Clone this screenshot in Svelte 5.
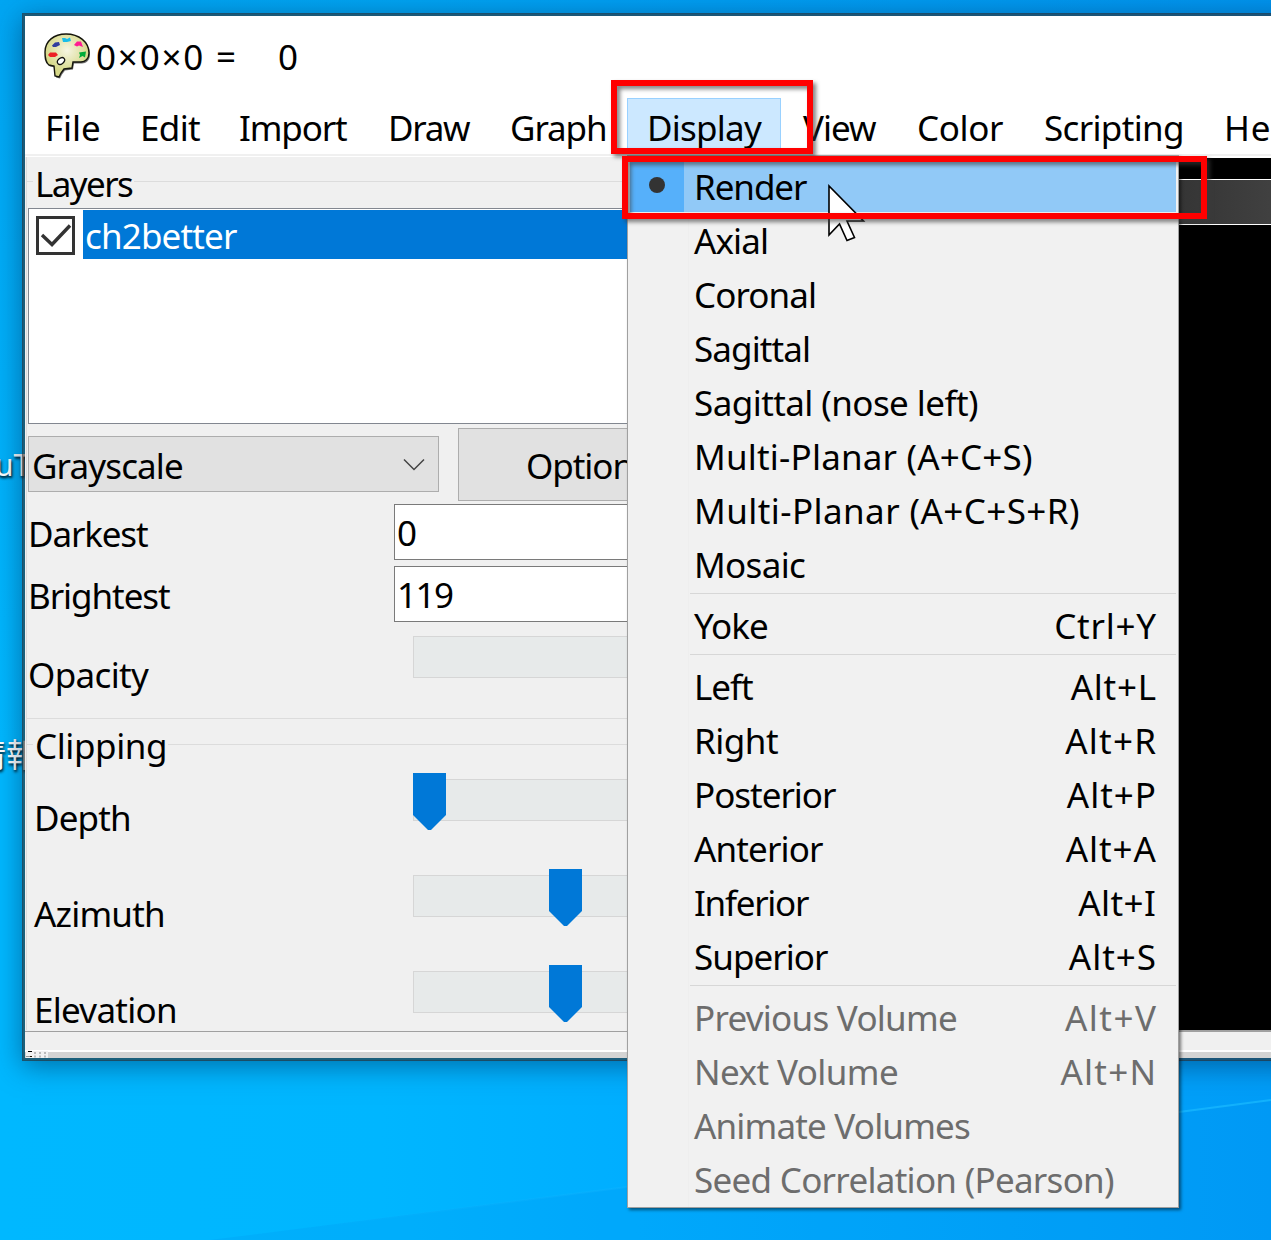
<script lang="ts">
  interface MenuEntry {
    label: string;
    width: number;
    shortcut?: string;
    shortcutWidth?: number;
    disabled?: boolean;
  }

  const MENUS = [
    { label: 'File', width: 51 },
    { label: 'Edit', width: 57 },
    { label: 'Import', width: 107 },
    { label: 'Draw', width: 80 },
    { label: 'Graph', width: 93 },
    { label: 'Display', width: 112 },
    { label: 'View', width: 74 },
    { label: 'Color', width: 84 },
    { label: 'Scripting', width: 137 },
    { label: 'Help', width: 74 },
  ];

  const GROUPS: MenuEntry[][] = [
    [
      { label: 'Render', width: 110 },
      { label: 'Axial', width: 73 },
      { label: 'Coronal', width: 119 },
      { label: 'Sagittal', width: 114 },
      { label: 'Sagittal (nose left)', width: 283 },
      { label: 'Multi-Planar (A+C+S)', width: 335 },
      { label: 'Multi-Planar (A+C+S+R)', width: 382 },
      { label: 'Mosaic', width: 108 },
    ],
    [{ label: 'Yoke', width: 73, shortcut: 'Ctrl+Y', shortcutWidth: 100 }],
    [
      { label: 'Left', width: 56, shortcut: 'Alt+L', shortcutWidth: 85 },
      { label: 'Right', width: 81, shortcut: 'Alt+R', shortcutWidth: 91 },
      { label: 'Posterior', width: 139, shortcut: 'Alt+P', shortcutWidth: 88 },
      { label: 'Anterior', width: 129, shortcut: 'Alt+A', shortcutWidth: 91 },
      { label: 'Inferior', width: 114, shortcut: 'Alt+I', shortcutWidth: 77 },
      { label: 'Superior', width: 133, shortcut: 'Alt+S', shortcutWidth: 86 },
    ],
    [
      { label: 'Previous Volume', width: 259, shortcut: 'Alt+V', shortcutWidth: 91, disabled: true },
      { label: 'Next Volume', width: 200, shortcut: 'Alt+N', shortcutWidth: 93, disabled: true },
      { label: 'Animate Volumes', width: 276, disabled: true },
      { label: 'Seed Correlation (Pearson)', width: 419, disabled: true },
    ],
  ];

  const SLIDERS = [
    { label: 'Depth', width: 92, pos: 0 },
    { label: 'Azimuth', width: 129, pos: 136 },
    { label: 'Elevation', width: 138, pos: 136 },
  ];

  let selected = $state('Render');
  let visible = $state(true);

  // spreads a label's letters so its ink covers the given number of pixels
  function fit(node: HTMLElement, width: number) {
    const text = node.textContent ?? '';
    const ctx = document.createElement('canvas').getContext('2d');
    if (!ctx || text.length < 2) return;
    const style = getComputedStyle(node);
    ctx.font = `${style.fontWeight} ${style.fontSize} ${style.fontFamily}`;
    const m = ctx.measureText(text);
    const ink = m.actualBoundingBoxRight + m.actualBoundingBoxLeft;
    const gap = (width - ink) / (text.length - 1);
    node.style.letterSpacing = `${gap}px`;
    node.style.marginRight = `${-gap}px`;
  }
</script>

<div class="desktop">
  <svg class="rays" width="1271" height="1240" viewBox="0 0 1271 1240">
    <defs>
      <linearGradient id="ray" gradientUnits="userSpaceOnUse" x1="300" y1="0" x2="1271" y2="0">
        <stop offset="0" stop-color="#18b8ff" stop-opacity="0" />
        <stop offset="1" stop-color="#18b8ff" stop-opacity="0.8" />
      </linearGradient>
    </defs>
    <path d="M210 1240L627 1187L1179 1112L1271 1100V1240Z" fill="#008be8" opacity="0.16" />
    <path d="M300 1229L627 1187L1179 1112L1271 1100" fill="none" stroke="url(#ray)" stroke-width="2" />
  </svg>
  <div class="icons">
    <span class="icon-name yt">uT</span>
    <span class="icon-name info">情報</span>
  </div>

  <div class="window">
    <header class="titlebar">
      <svg class="logo" width="50" height="48" viewBox="0 0 50 48">
        <defs>
          <radialGradient id="wood" cx="0.5" cy="0.38" r="0.5">
            <stop offset="0" stop-color="#f6f5e2" />
            <stop offset="1" stop-color="#d6d888" />
          </radialGradient>
        </defs>
        <path d="M2 20C2 9 11 2 23 2C36 2 46 10 46 21C46 27 42 30 38 30H30L29 36L21 37L18 41L16 45L12 44L11 34L6 33C2 30 2 25 2 20Z" fill="#333" opacity="0.7" transform="translate(1 1.5)" />
        <path d="M2 20C2 9 11 2 23 2C36 2 46 10 46 21C46 27 42 30 38 30H30L29 36L21 37L18 41L16 45L12 44L11 34L6 33C2 30 2 25 2 20Z" fill="url(#wood)" stroke="#15150c" stroke-width="1.4" />
        <ellipse cx="18" cy="29" rx="4" ry="2.8" fill="#fff" stroke="#111" stroke-width="1.3" transform="rotate(-40 18 29)" />
        <path d="M5 23L7 20.500H13L15 23L12 25H7Z" fill="#ed2024" />
        <path d="M9 13.500L12 10.500L16 10L17 13L13 15H10Z" fill="#303d9e" />
        <path d="M19 6H22L24 7L27 5.500L28 9L24 10H20Z" fill="#19bde9" />
        <path d="M31 13L34 9.500H38L40 15L36 13.500L34 14.500Z" fill="#ff1b92" />
        <path d="M36 20.500L43 19.500L42 25.500L39.500 24L36 26L37 23Z" fill="#00ab38" />
      </svg>
      <span class="title"><span use:fit={137}>0×0×0 =</span></span>
      <span class="title-value">0</span>
    </header>

    <nav class="menubar">
      {#each MENUS as menu}
        <div class="menu" class:open={menu.label === 'Display'}>
          <span use:fit={menu.width}>{menu.label}</span>
        </div>
      {/each}
    </nav>

    <div class="workspace">
      <aside class="panel">
        <section class="group layers">
          <h2 class="legend"><span use:fit={95}>Layers</span></h2>
          <div class="layer-list">
            <div class="layer">
              <button class="check" aria-label="Toggle layer" onclick={() => (visible = !visible)}>
                {#if visible}
                  <svg width="33" height="33" viewBox="0 0 33 33">
                    <path d="M3 16L13 25.500L31 6.500" fill="none" stroke="#333" stroke-width="3.400" />
                  </svg>
                {/if}
              </button>
              <div class="layer-name"><span use:fit={151}>ch2better</span></div>
            </div>
          </div>

          <div class="color-row">
            <div class="select">
              <span use:fit={148}>Grayscale</span>
              <svg width="22" height="13" viewBox="0 0 22 13">
                <path d="M1 1.500L11 11.500L21 1.500" fill="none" stroke="#444" stroke-width="1.500" />
              </svg>
            </div>
            <div class="options"><span use:fit={121}>Options</span></div>
          </div>

          <div class="field">
            <span use:fit={117}>Darkest</span>
            <div class="input">0</div>
          </div>
          <div class="field">
            <span use:fit={139}>Brightest</span>
            <div class="input"><span use:fit={53}>119</span></div>
          </div>
          <div class="opacity">
            <span use:fit={119}>Opacity</span>
            <div class="track"></div>
          </div>
        </section>

        <section class="group clipping">
          <h2 class="legend"><span use:fit={128}>Clipping</span></h2>
          {#each SLIDERS as slider}
            <div class="slider">
              <span use:fit={slider.width}>{slider.label}</span>
              <div class="track">
                <svg class="thumb" style:left="{slider.pos}px" width="33" height="57" viewBox="0 0 33 57">
                  <path d="M0 0H33V42L18 57H15L0 42Z" fill="#0078d7" />
                </svg>
              </div>
            </div>
          {/each}
        </section>
      </aside>
      <main class="viewer">
        <div class="colorbar"></div>
      </main>
    </div>

    <footer class="statusbar">
      <svg class="grip" width="22" height="7" viewBox="0 0 22 7">
        <path d="M0 0H22V7H0Z" fill="#f2f2f2" />
        <path d="M2 .5H6" stroke="#000" />
        <path d="M0 5.500H4" stroke="#999" />
        <path d="M4 5.500H6" stroke="#201400" />
        <path d="M8 2H20M8 5.500H20" stroke="#bbb" stroke-width="2" stroke-dasharray="2 3" />
      </svg>
    </footer>
  </div>

  <div class="popup">
    {#each GROUPS as group, i}
      {#if i > 0}
        <div class="separator"></div>
      {/if}
      {#each group as entry}
        <button
          class="entry"
          class:active={entry.label === selected}
          disabled={entry.disabled}
          onclick={() => (selected = entry.label)}
        >
          <span class="mark"></span>
          <span class="label" use:fit={entry.width}>{entry.label}</span>
          {#if entry.shortcut}
            <span class="keys"><span use:fit={entry.shortcutWidth ?? 0}>{entry.shortcut}</span></span>
          {/if}
        </button>
      {/each}
    {/each}
  </div>

  <div class="callout callout-menu"></div>
  <svg class="cursor" width="42" height="60" viewBox="0 0 42 60">
    <path d="M2 2V51L12.500 40L20 56.500L27.500 53.500L20 37H36.500Z" fill="#fff" stroke="#000" stroke-width="1.600" />
  </svg>
  <div class="callout callout-entry"></div>
</div>

<style>
  :global(body) {
    margin: 0;
  }

  .desktop {
    position: relative;
    width: 1271px;
    height: 1240px;
    overflow: hidden;
    font-family: 'Noto Sans', 'Open Sans', 'Noto Sans CJK JP', sans-serif;
    font-size: 35px;
    line-height: 54px;
    color: #000;
    white-space: nowrap;
    background:
      linear-gradient(rgba(0, 132, 220, 0.35), rgba(0, 132, 220, 0) 60%),
      linear-gradient(90deg, #00b8ff 0%, #00b6ff 30%, #00aeff 50%, #009df8 100%);
  }

  .rays {
    position: absolute;
    inset: 0;
  }

  .icons {
    position: absolute;
    left: 0;
    top: 0;
    width: 25px;
    height: 100%;
    overflow: hidden;
  }

  .icon-name {
    position: absolute;
    color: #fff;
    font-size: 30px;
    text-shadow: 1px 2px 3px #000;
  }

  .yt {
    left: -5px;
    top: 438px;
  }

  .info {
    left: -27px;
    top: 728px;
    font-size: 33px;
  }

  .window {
    position: relative;
    box-sizing: border-box;
    display: flex;
    flex-direction: column;
    width: 1300px;
    height: 1048px;
    margin-left: 22px;
    top: 13px;
    border: 3px solid rgba(45, 38, 36, 0.6);
    background: #fff;
    background-clip: padding-box;
    box-shadow: 0 5px 26px rgba(0, 40, 80, 0.5);
  }

  .titlebar {
    display: flex;
    align-items: center;
    height: 82px;
    flex: none;
  }

  .logo {
    margin: -2px 0 0 18px;
  }

  .title {
    margin: -1px 0 0 3px;
    width: 182px;
  }

  .title-value {
    margin-top: -1px;
  }

  .menubar {
    display: grid;
    grid-template-columns: 95px 99px 149px 122px 137px 159px 111px 127px 180px 120px;
    height: 56px;
    flex: none;
  }

  .menu {
    box-sizing: border-box;
    padding: 3px 0 0 20px;
  }

  /* the V has no side bearing */
  .menu:nth-child(7) {
    padding-left: 17px;
  }

  .menu.open {
    width: 154px;
    padding: 2px 0 0 19px;
    border: 1px solid #99d1ff;
    background: #cce8ff;
  }

  .workspace {
    display: flex;
    height: 877px;
    flex: none;
    border-top: 2px solid #f0f0f0;
    box-sizing: border-box;
  }

  .panel {
    width: 700px;
    margin-top: 1px;
    padding-left: 1px;
    box-sizing: border-box;
    background: #f0f0f0;
  }

  .group {
    position: relative;
    box-sizing: border-box;
    border-left: 1px solid #dcdcdc;
  }

  .group::before {
    content: '';
    position: absolute;
    left: 0;
    right: 0;
    top: 24px;
    border-top: 1px solid #dcdcdc;
  }

  .layers {
    height: 562px;
    border-bottom: 1px solid #dcdcdc;
  }

  .legend {
    position: relative;
    width: max-content;
    height: 51px;
    margin: 0 0 0 6px;
    padding: 0 0 0 2px;
    background: #f0f0f0;
    font-size: 35px;
    font-weight: 400;
    line-height: 53px;
  }

  .layer-list {
    box-sizing: border-box;
    height: 216px;
    margin-left: 1px;
    border: 1px solid #828790;
    background: #fff;
  }

  .layer {
    display: flex;
    align-items: center;
    height: 51px;
    padding: 0 0 0 7px;
  }

  .check {
    box-sizing: border-box;
    width: 39px;
    height: 39px;
    margin-top: 2px;
    padding: 0;
    border: 3px solid #333;
    background: #fff;
  }

  .check svg {
    display: block;
  }

  .layer-name {
    flex: 1;
    height: 49px;
    margin-left: 8px;
    padding-left: 2px;
    background: #0078d7;
    color: #fff;
    line-height: 51px;
  }

  .color-row {
    display: flex;
    align-items: flex-start;
    height: 80px;
    margin-left: 1px;
  }

  .select {
    display: flex;
    align-items: center;
    justify-content: space-between;
    box-sizing: border-box;
    width: 411px;
    height: 56px;
    margin-top: 12px;
    padding: 3px 13px 0 3px;
    border: 1px solid #adadad;
    background: #e1e1e1;
  }

  .select svg {
    margin-top: -3px;
  }

  .options {
    box-sizing: border-box;
    width: 260px;
    height: 73px;
    margin: 4px 0 0 19px;
    padding: 10px 0 0 67px;
    border: 1px solid #adadad;
    background: #e1e1e1;
  }

  .field {
    display: grid;
    grid-template-columns: 367px 300px;
    height: 62px;
    line-height: 60px;
  }

  .field > span,
  .opacity > span {
    margin-left: 1px;
  }

  .input {
    box-sizing: border-box;
    height: 56px;
    padding-left: 2px;
    border: 1px solid #7a7a7a;
    background: #fff;
    line-height: 56px;
  }

  .opacity {
    display: grid;
    grid-template-columns: 386px 300px;
    padding-top: 8px;
    line-height: 78px;
  }

  .track {
    position: relative;
    box-sizing: border-box;
    height: 42px;
    border: 1px solid #d6d6d6;
    background: #e7eaea;
  }

  .clipping {
    height: 311px;
  }

  .clipping::before {
    top: 25px;
  }

  .clipping .legend {
    height: 60px;
    line-height: 54px;
  }

  .slider {
    display: grid;
    grid-template-columns: 379px 300px;
    height: 96px;
    padding-left: 7px;
    line-height: 78px;
  }

  .thumb {
    position: absolute;
    top: -7px;
    margin-left: -1px;
  }

  .viewer {
    flex: 1;
    margin-top: 2px;
    padding-top: 21px;
    border-bottom: 1px solid #a0a0a0;
    background: #000;
  }

  .colorbar {
    height: 44px;
    border-top: 1px solid #fff;
    border-bottom: 1px solid #fff;
    background: linear-gradient(90deg, #000 0, #383838 480px, #424242 560px);
  }

  .statusbar {
    box-sizing: border-box;
    flex: 1;
    border-top: 1px solid #a0a0a0;
    background: linear-gradient(#f0f0f0 18px, #fff 18px, #fff 20px, #d4d4d4 20px);
  }

  .grip {
    display: block;
    margin: 19px 0 0 1px;
  }

  .popup {
    position: absolute;
    left: 627px;
    top: 155px;
    box-sizing: border-box;
    width: 552px;
    height: 1053px;
    padding: 2px;
    border: 1px solid #a0a0a0;
    background: linear-gradient(90deg, #f1f1f1 60px, #eee 60px, #eee 61px, #f1f1f1 61px);
    box-shadow: 2px 2px 3px rgba(0, 0, 0, 0.5);
  }

  .entry {
    display: flex;
    width: 100%;
    height: 54px;
    padding: 0;
    border: 0;
    background: none;
    color: #000;
    font: inherit;
    line-height: 57px;
    text-align: left;
  }

  .entry:disabled {
    color: #6d6d6d;
  }

  .mark {
    display: flex;
    align-items: center;
    justify-content: center;
    width: 54px;
    margin-right: 10px;
  }

  .active {
    background: #91c9f7;
  }

  .active .mark {
    background: #56b0fa;
  }

  .active .mark::after {
    content: '';
    width: 16px;
    height: 16px;
    border-radius: 50%;
    background: #333;
  }

  .keys {
    margin-left: auto;
    margin-right: 20px;
  }

  .separator {
    height: 3px;
    margin: 3px 0 0 60px;
    border-top: 1px solid #d7d7d7;
  }

  .callout {
    position: absolute;
    box-sizing: border-box;
    border: 6px solid #f00;
    filter: drop-shadow(3px 3px 2px rgba(60, 60, 60, 0.65));
  }

  .callout-menu {
    left: 611px;
    top: 80px;
    width: 202px;
    height: 74px;
  }

  .callout-entry {
    left: 622px;
    top: 156px;
    width: 585px;
    height: 63px;
  }

  .cursor {
    position: absolute;
    left: 827px;
    top: 184px;
  }
</style>
